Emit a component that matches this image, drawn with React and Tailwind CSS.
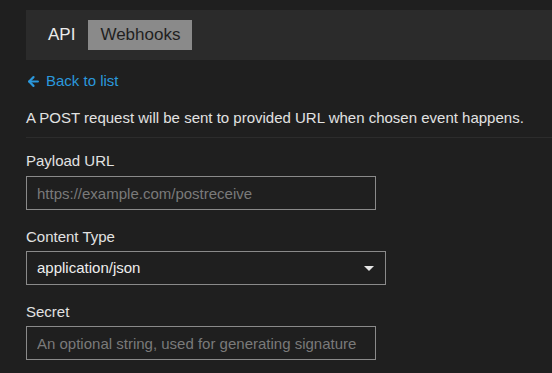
import { ArrowLeft } from "lucide-react"

function Field({ label, children, className = "" }) {
  return (
    <div className={className}>
      <label className="block text-[15px] leading-5 text-[#e2e2e2]">{label}</label>
      {children}
    </div>
  )
}

export default function App() {
  return (
    <div className="min-h-screen bg-[#1f1f1f] pl-[26px] pt-[10px] font-['Liberation_Sans',Arial,sans-serif]">
      <div className="h-[50px] bg-[#2b2b2b] flex items-center pl-[22px] gap-[13px]">
        <span className="text-[17px] text-[#ececec]">API</span>
        <span className="h-[30px] px-3 flex items-center bg-[#8a8a8a] text-[17px] text-[#1f1f1f]">Webhooks</span>
      </div>

      <a href="#" className="mt-[11px] flex items-center gap-[5px] text-[15px] leading-5 text-[#2b98dc]">
        <ArrowLeft className="w-[15px] h-[15px]" strokeWidth={3.5} /> Back to list
      </a>

      <p className="mt-[17px] text-[15px] leading-5 text-[#e2e2e2]">
        A POST request will be sent to provided URL when chosen event happens.
      </p>

      <div className="mt-[9px] border-t border-[#2c2c2c]" />

      <div className="pr-[176px]">
        <Field label="Payload URL" className="mt-[13px]">
          <input
            placeholder="https://example.com/postreceive"
            className="mt-[5px] block w-[350px] h-[34px] px-[10px] bg-transparent border border-[#8a8a8a] text-[15px] text-[#e2e2e2] placeholder:text-[#7a7a7a] outline-none"
          />
        </Field>

        <Field label="Content Type" className="mt-[17px]">
          <div className="mt-[4px] relative w-[360px] h-[34px] border border-[#8a8a8a] flex items-center px-[10px]">
            <span className="text-[15px] text-[#eeeeee]">application/json</span>
            <span className="absolute right-[11px] top-[14px] w-0 h-0 border-l-[5px] border-r-[5px] border-t-[5px] border-l-transparent border-r-transparent border-t-[#e6e6e6]" />
          </div>
        </Field>

        <Field label="Secret" className="mt-[17px]">
          <input
            placeholder="An optional string, used for generating signature"
            className="mt-[4px] block w-[350px] h-[34px] px-[10px] bg-transparent border border-[#8a8a8a] text-[15px] text-[#e2e2e2] placeholder:text-[#7a7a7a] outline-none"
          />
        </Field>
      </div>
    </div>
  )
}
